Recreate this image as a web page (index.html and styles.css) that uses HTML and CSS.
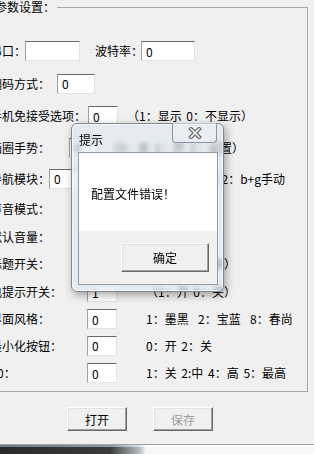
FILE: index.html
```html
<!DOCTYPE html>
<html lang="zh-CN">
<head>
  <meta charset="UTF-8">
  <meta name="viewport" content="width=device-width, initial-scale=1.0">
  <title>参数设置</title>
  <link rel="stylesheet" href="styles.css">
</head>
<body>
  <div class="window">
    <fieldset class="group">
      <legend>参数设置：</legend>
      <div class="rows">
        <div class="row">
          <span class="lbl w35">串口：</span>
          <input class="field port" type="text" value="">
          <span class="lbl baud">波特率：</span>
          <input class="field baud-field" type="text" value="0">
        </div>
        <div class="row">
          <span class="lbl w67">编码方式：</span>
          <input class="field code" type="text" value="0">
        </div>
        <div class="row">
          <span class="lbl w98">手机免接受选项：</span>
          <input class="field" type="text" value="0">
          <span class="hint near">（1：显示 0：不显示）</span>
        </div>
        <div class="row">
          <span class="lbl w79">画圈手势：</span>
          <input class="field" type="text" value="0">
          <span class="hint end gesture">（0：关 1：开 2：设置）</span>
        </div>
        <div class="row">
          <span class="lbl w59">导航模块：</span>
          <input class="field" type="text" value="0">
          <span class="hint end nav">0：关 1：b手动 2：b+g手动</span>
        </div>
        <div class="row">
          <span class="lbl w97">声音模式：</span>
          <input class="field" type="text" value="0">
          <span class="hint">0~3</span>
        </div>
        <div class="row">
          <span class="lbl w97">默认音量：</span>
          <input class="field" type="text" value="8">
          <span class="hint">0~15</span>
        </div>
        <div class="row">
          <span class="lbl w97">标题开关：</span>
          <input class="field" type="text" value="1">
          <span class="hint">（1：开 0：关）</span>
        </div>
        <div class="row">
          <span class="lbl w97 pull-one">来电提示开关：</span>
          <input class="field" type="text" value="1">
          <span class="hint">（1：开 0：关）</span>
        </div>
        <div class="row">
          <span class="lbl w97">界面风格：</span>
          <input class="field" type="text" value="0">
          <span class="hint">1：墨黑  2：宝蓝  8：春尚</span>
        </div>
        <div class="row">
          <span class="lbl w97">最小化按钮：</span>
          <input class="field" type="text" value="0">
          <span class="hint">0：开 2：关</span>
        </div>
        <div class="row">
          <span class="lbl w97 pull-two">增益0：</span>
          <input class="field" type="text" value="0">
          <span class="hint">1：关 2:中 4：高 5：最高</span>
        </div>
      </div>
    </fieldset>

    <div class="actions">
      <button class="btn">打开</button>
      <button class="btn" disabled>保存</button>
    </div>
  </div>

  <div class="taskbar"></div>

  <div class="dialog">
    <div class="dialog-title">提示</div>
    <div class="close">
      <svg width="14" height="12" viewBox="0 0 14 12">
        <path d="M3 2 L11 10 M11 2 L3 10" stroke="#6c6c6c" stroke-width="4" stroke-linecap="square" fill="none"/>
        <path d="M3 2 L11 10 M11 2 L3 10" stroke="#f2f2f2" stroke-width="1.6" stroke-linecap="square" fill="none"/>
      </svg>
    </div>
    <div class="dialog-panel">
      <div class="dialog-msg">配置文件错误！</div>
      <div class="dialog-actions">
        <button class="btn ok">确定</button>
      </div>
    </div>
  </div>
</body>
</html>
```

FILE: styles.css
```css
html, body {
  margin: 0;
  padding: 0;
  overflow: hidden;
}

body {
  position: relative;
  width: 314px;
  height: 454px;
  background-color: #f0f0f0;
  font-family: "Noto Sans CJK SC", sans-serif;
  font-size: 12px;
  color: #000;
}

.window {
  height: 444px;
}

/* group box */
.group {
  margin: 0 6px 0 -16px;
  padding: 0 0 4px;
  border: 1px solid #a8a8a8;
  min-width: 0;
}

.group legend {
  margin-left: 10px;
  padding: 0 2px 0 0;
  line-height: 14px;
}

.rows {
  display: grid;
  grid-template-columns: minmax(0, 1fr);
  grid-template-rows: 32px 33px 32px 31px 31px 29px 27px 28px 28px 26px 27px 28px;
  margin-top: 21px;
}

.row {
  display: flex;
  align-items: center;
  min-width: 0;
  padding-left: 5px;
  white-space: pre;
}

.lbl {
  flex: none;
  line-height: 16px;
}

.w35 { width: 35px; }
.w59 { width: 59px; }
.w67 { width: 67px; }
.w79 { width: 79px; }
.w97 { width: 97px; }
.w98 { width: 98px; }

.pull-one { text-indent: -12px; }
.pull-two { text-indent: -17px; }

.baud {
  width: 46px;
  margin-left: 15px;
}

.field {
  flex: none;
  box-sizing: border-box;
  width: 30px;
  height: 20px;
  margin: 0;
  padding: 0 0 0 4px;
  border: 1px solid;
  border-color: #6a6a6a #e3e3e3 #e3e3e3 #a0a0a0;
  background: #fff;
  font: inherit;
  color: #000;
}

.field.port { width: 55px; }
.field.baud-field { width: 54px; }
.field.code { width: 38px; }

.hint {
  margin-left: 29px;
  line-height: 16px;
  word-spacing: 2px;
}

.hint.near { margin-left: 9px; }
.hint.end { margin-left: auto; }
.hint.gesture { margin-right: 63px; }
.hint.nav { margin-right: 22px; }

/* buttons */
.actions {
  display: flex;
  gap: 26px;
  padding-left: 67px;
  margin-top: 15px;
}

.btn {
  box-sizing: border-box;
  width: 60px;
  height: 24px;
  padding: 0;
  border: 1px solid;
  border-color: #fff #696969 #696969 #fff;
  box-shadow: inset -1px -1px #a0a0a0, inset 1px 1px #e3e3e3;
  background: #f0f0f0;
  font: inherit;
  color: #000;
}

.btn:disabled {
  color: #a0a0a0;
}

.taskbar {
  height: 10px;
  box-sizing: border-box;
  border-top: 1px solid #9ea4a9;
  background:
    linear-gradient(to right, #6c7882, #8d99a3 110px, #e6eaee 142px, #fff 146px) top / 100% 2px no-repeat,
    linear-gradient(to right, #2a2a2a, #3b3b3b 110px, #b9bec2 140px, #f7f7f7 146px);
}

/* message box */
.dialog {
  position: absolute;
  left: 71px;
  top: 123px;
  width: 153px;
  height: 169px;
  box-sizing: border-box;
  display: flex;
  flex-direction: column;
  padding: 0 5px 6px 6px;
  border: 1px solid #7c8894;
  border-radius: 6px;
  background: rgba(222, 232, 242, 0.6);
  backdrop-filter: blur(2px);
  box-shadow: 2px 3px 8px rgba(0, 0, 0, 0.35), inset 0 0 0 1px rgba(255, 255, 255, 0.6);
}

.dialog-title {
  height: 28px;
  display: flex;
  align-items: center;
  padding: 2px 0 0 1px;
  box-sizing: border-box;
}

.close {
  position: absolute;
  top: -1px;
  right: 6px;
  width: 45px;
  height: 20px;
  box-sizing: border-box;
  display: flex;
  align-items: center;
  justify-content: center;
  border: 1px solid #8c97a3;
  border-top: none;
  border-radius: 0 0 4px 4px;
  background: rgba(236, 240, 244, 0.6);
}

.dialog-panel {
  flex: 1;
  display: flex;
  flex-direction: column;
  border: 1px solid #919daa;
  background: #f0f0f0;
}

.dialog-msg {
  height: 78px;
  box-sizing: border-box;
  display: flex;
  align-items: center;
  padding: 2px 0 0 12px;
  background: #fff;
}

.dialog-actions {
  flex: 1;
  display: flex;
  justify-content: flex-end;
  align-items: flex-start;
  padding: 12px 8px 0 0;
}

.btn.ok {
  width: 88px;
  height: 29px;
}
```
